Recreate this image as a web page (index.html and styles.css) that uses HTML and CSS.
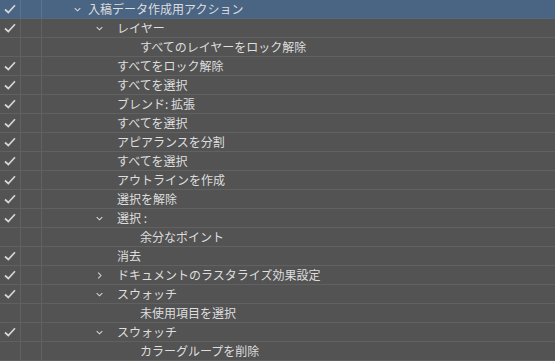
FILE: index.html
```html
<!DOCTYPE html>
<html lang="ja">
<head>
    <meta charset="UTF-8">
    <title>アクション</title>
    <link rel="stylesheet" href="styles.css">
</head>
<body>
<div class="actions">
    <div class="row selected">
        <div class="chk"><svg viewBox="0 0 12 10"><path d="M1 5.5 L4.3 8.5 L11 1.2"/></svg></div>
        <div class="dlg"></div>
        <div class="name lv0"><span class="tw"><svg viewBox="0 0 8 5"><path d="M0.8 0.8 L4 4 L7.2 0.8"/></svg></span>入稿データ作成用アクション</div>
    </div>
    <div class="row">
        <div class="chk"><svg viewBox="0 0 12 10"><path d="M1 5.5 L4.3 8.5 L11 1.2"/></svg></div>
        <div class="dlg"></div>
        <div class="name lv1"><span class="tw"><svg viewBox="0 0 8 5"><path d="M0.8 0.8 L4 4 L7.2 0.8"/></svg></span>レイヤー</div>
    </div>
    <div class="row">
        <div class="chk"></div>
        <div class="dlg"></div>
        <div class="name lv2">すべてのレイヤーをロック解除</div>
    </div>
    <div class="row">
        <div class="chk"><svg viewBox="0 0 12 10"><path d="M1 5.5 L4.3 8.5 L11 1.2"/></svg></div>
        <div class="dlg"></div>
        <div class="name lv1">すべてをロック解除</div>
    </div>
    <div class="row">
        <div class="chk"><svg viewBox="0 0 12 10"><path d="M1 5.5 L4.3 8.5 L11 1.2"/></svg></div>
        <div class="dlg"></div>
        <div class="name lv1">すべてを選択</div>
    </div>
    <div class="row">
        <div class="chk"><svg viewBox="0 0 12 10"><path d="M1 5.5 L4.3 8.5 L11 1.2"/></svg></div>
        <div class="dlg"></div>
        <div class="name lv1">ブレンド: 拡張</div>
    </div>
    <div class="row">
        <div class="chk"><svg viewBox="0 0 12 10"><path d="M1 5.5 L4.3 8.5 L11 1.2"/></svg></div>
        <div class="dlg"></div>
        <div class="name lv1">すべてを選択</div>
    </div>
    <div class="row">
        <div class="chk"><svg viewBox="0 0 12 10"><path d="M1 5.5 L4.3 8.5 L11 1.2"/></svg></div>
        <div class="dlg"></div>
        <div class="name lv1">アピアランスを分割</div>
    </div>
    <div class="row">
        <div class="chk"><svg viewBox="0 0 12 10"><path d="M1 5.5 L4.3 8.5 L11 1.2"/></svg></div>
        <div class="dlg"></div>
        <div class="name lv1">すべてを選択</div>
    </div>
    <div class="row">
        <div class="chk"><svg viewBox="0 0 12 10"><path d="M1 5.5 L4.3 8.5 L11 1.2"/></svg></div>
        <div class="dlg"></div>
        <div class="name lv1">アウトラインを作成</div>
    </div>
    <div class="row">
        <div class="chk"><svg viewBox="0 0 12 10"><path d="M1 5.5 L4.3 8.5 L11 1.2"/></svg></div>
        <div class="dlg"></div>
        <div class="name lv1">選択を解除</div>
    </div>
    <div class="row">
        <div class="chk"><svg viewBox="0 0 12 10"><path d="M1 5.5 L4.3 8.5 L11 1.2"/></svg></div>
        <div class="dlg"></div>
        <div class="name lv1"><span class="tw"><svg viewBox="0 0 8 5"><path d="M0.8 0.8 L4 4 L7.2 0.8"/></svg></span>選択 :</div>
    </div>
    <div class="row">
        <div class="chk"></div>
        <div class="dlg"></div>
        <div class="name lv2">余分なポイント</div>
    </div>
    <div class="row">
        <div class="chk"><svg viewBox="0 0 12 10"><path d="M1 5.5 L4.3 8.5 L11 1.2"/></svg></div>
        <div class="dlg"></div>
        <div class="name lv1">消去</div>
    </div>
    <div class="row">
        <div class="chk"><svg viewBox="0 0 12 10"><path d="M1 5.5 L4.3 8.5 L11 1.2"/></svg></div>
        <div class="dlg"></div>
        <div class="name lv1"><span class="tw"><svg viewBox="0 0 8 8"><path d="M2.5 0.8 L5.7 4 L2.5 7.2"/></svg></span>ドキュメントのラスタライズ効果設定</div>
    </div>
    <div class="row">
        <div class="chk"><svg viewBox="0 0 12 10"><path d="M1 5.5 L4.3 8.5 L11 1.2"/></svg></div>
        <div class="dlg"></div>
        <div class="name lv1"><span class="tw"><svg viewBox="0 0 8 5"><path d="M0.8 0.8 L4 4 L7.2 0.8"/></svg></span>スウォッチ</div>
    </div>
    <div class="row">
        <div class="chk"></div>
        <div class="dlg"></div>
        <div class="name lv2">未使用項目を選択</div>
    </div>
    <div class="row">
        <div class="chk"><svg viewBox="0 0 12 10"><path d="M1 5.5 L4.3 8.5 L11 1.2"/></svg></div>
        <div class="dlg"></div>
        <div class="name lv1"><span class="tw"><svg viewBox="0 0 8 5"><path d="M0.8 0.8 L4 4 L7.2 0.8"/></svg></span>スウォッチ</div>
    </div>
    <div class="row">
        <div class="chk"></div>
        <div class="dlg"></div>
        <div class="name lv2">カラーグループを削除</div>
    </div>
</div>
</body>
</html>
```

FILE: styles.css
```css
*{
    box-sizing: border-box;
}
html, body{
    margin: 0;
    padding: 0;
    background: #535353;
}
.actions{
    width: 555px;
    font-family: "Noto Sans CJK JP", "Noto Sans", sans-serif;
    font-size: 12px;
    color: #dedede;
}
.row{
    display: flex;
    height: 19px;
    border-bottom: 1px solid #616161;
}
.row.selected{
    background: #4a6483;
    border-bottom-color: #56687d;
}
.chk{
    width: 21px;
    border-right: 1px solid #616161;
    display: flex;
    align-items: center;
    justify-content: center;
}
.chk svg{
    width: 12px;
    height: 10px;
    fill: none;
    stroke: #d6d6d6;
    stroke-width: 1.7;
}
.dlg{
    width: 21px;
    border-right: 1px solid #616161;
}
.selected .chk, .selected .dlg{
    border-right-color: #5a7290;
}
.name{
    flex: 1;
    display: flex;
    align-items: center;
    line-height: 18px;
    white-space: nowrap;
}
.tw{
    display: inline-flex;
    width: 8px;
    height: 8px;
    align-items: center;
    justify-content: center;
}
.tw svg{
    width: 7px;
    height: 7px;
    fill: none;
    stroke: #d6d6d6;
    stroke-width: 1.2;
}
.lv0{
    padding-left: 31px;
}
.lv0 .tw{
    margin-right: 7px;
}
.lv1{
    padding-left: 53px;
}
.lv1 .tw{
    margin-right: 14px;
}
.lv1:not(:has(.tw)){
    padding-left: 75px;
}
.lv2{
    padding-left: 98px;
}
```
